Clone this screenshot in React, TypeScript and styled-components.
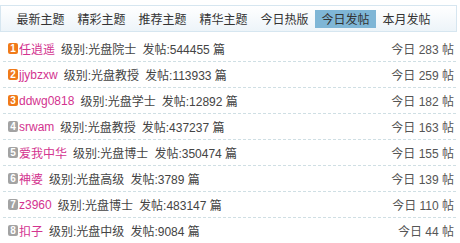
import React from 'react';
import styled, { createGlobalStyle } from 'styled-components';

const GlobalStyle = createGlobalStyle`
  body {
    margin: 0;
    background: #ffffff;
    font-family: 'Liberation Sans', 'Noto Sans CJK SC', sans-serif;
    font-size: 12px;
    color: #333;
  }
`;

const Wrapper = styled.div`
  width: 460px;
  padding-top: 5px;
`;

const TabBar = styled.div`
  display: flex;
  align-items: center;
  width: 457px;
  height: 27px;
  padding-left: 9px;
  box-sizing: border-box;
  border: 1px solid #d6e6f0;
  background: linear-gradient(#ffffff, #edf4f9);
`;

const Tab = styled.span<{ $active?: boolean }>`
  display: flex;
  align-items: center;
  height: 18px;
  padding: 0 6.5px;
  white-space: nowrap;
  color: #333;
  background: ${(p) => (p.$active ? '#7fb6d6' : 'transparent')};
`;

const List = styled.ul`
  list-style: none;
  margin: 4px 4px 0 3px;
  padding: 0;
`;

const Row = styled.li`
  display: flex;
  align-items: center;
  height: 25px;
  padding: 0 0 0 5px;
  border-bottom: 1px dashed #cfdfe4;
  white-space: nowrap;
`;

const Badge = styled.span<{ $hot: boolean }>`
  display: inline-flex;
  align-items: center;
  justify-content: center;
  width: 10px;
  height: 11px;
  border-radius: 2px;
  margin-right: 1px;
  background: ${(p) => (p.$hot ? '#f07a1a' : '#a3a3a3')};
  color: #fff;
  font-size: 10px;
  font-weight: bold;
  line-height: 1;
`;

const Name = styled.span`
  color: #d3338f;
`;

const Info = styled.span`
  margin-left: 6px;
  color: #444;
`;

const Today = styled.span`
  margin-left: auto;
  padding-right: 2px;
  color: #555;
`;

const tabs = ['最新主题', '精彩主题', '推荐主题', '精华主题', '今日热版', '今日发帖', '本月发帖'];

const users = [
  { name: '任逍遥', level: '光盘院士', posts: 544455, today: 283 },
  { name: 'jjybzxw', level: '光盘教授', posts: 113933, today: 259 },
  { name: 'ddwg0818', level: '光盘学士', posts: 12892, today: 182 },
  { name: 'srwam', level: '光盘教授', posts: 437237, today: 163 },
  { name: '爱我中华', level: '光盘博士', posts: 350474, today: 155 },
  { name: '神婆', level: '光盘高级', posts: 3789, today: 139 },
  { name: 'z3960', level: '光盘博士', posts: 483147, today: 110 },
  { name: '扣子', level: '光盘中级', posts: 9084, today: 44 },
];

export default function App() {
  return (
    <Wrapper>
      <GlobalStyle />
      <TabBar>
        {tabs.map((t) => (
          <Tab key={t} $active={t === '今日发帖'}>
            {t}
          </Tab>
        ))}
      </TabBar>
      <List>
        {users.map((u, i) => (
          <Row key={u.name}>
            <Badge $hot={i < 3}>{i + 1}</Badge>
            <Name>{u.name}</Name>
            <Info>级别:{u.level}</Info>
            <Info>发帖:{u.posts} 篇</Info>
            <Today>今日 {u.today} 帖</Today>
          </Row>
        ))}
      </List>
    </Wrapper>
  );
}
